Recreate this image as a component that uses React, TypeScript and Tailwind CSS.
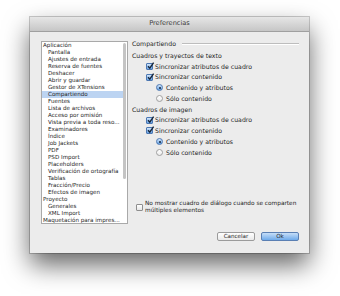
import React from "react";

const items: [string, number][] = [
  ["Aplicación", 0],
  ["Pantalla", 1],
  ["Ajustes de entrada", 1],
  ["Reserva de fuentes", 1],
  ["Deshacer", 1],
  ["Abrir y guardar", 1],
  ["Gestor de XTensions", 1],
  ["Compartiendo", 1],
  ["Fuentes", 1],
  ["Lista de archivos", 1],
  ["Acceso por omisión", 1],
  ["Vista previa a toda reso...", 1],
  ["Examinadores", 1],
  ["Índice", 1],
  ["Job Jackets", 1],
  ["PDF", 1],
  ["PSD Import", 1],
  ["Placeholders", 1],
  ["Verificación de ortografía", 1],
  ["Tablas", 1],
  ["Fracción/Precio", 1],
  ["Efectos de imagen", 1],
  ["Proyecto", 0],
  ["Generales", 1],
  ["XML Import", 1],
  ["Maquetación para impres...", 0],
];

function Checkbox({ checked }: { checked: boolean }) {
  return checked ? (
    <div className="relative w-[7px] h-[7px] shrink-0 rounded-[1px] border border-[#4d78b3] bg-linear-to-b from-[#d3e6fa] to-[#65a2e4]">
      <svg className="absolute left-0 -top-[2px]" width="8" height="8" viewBox="0 0 8 8">
        <path d="M1 4.3 L2.8 6.2 L6.6 0.6" fill="none" stroke="#15243a" strokeWidth="1.4" />
      </svg>
    </div>
  ) : (
    <div className="w-[7px] h-[7px] shrink-0 rounded-[1px] border border-[#8e8e8e] bg-linear-to-b from-white to-[#e6e6e6]" />
  );
}

function Radio({ on }: { on: boolean }) {
  return on ? (
    <div className="w-[7px] h-[7px] shrink-0 rounded-full border border-[#4d78b3] bg-linear-to-b from-[#d3e6fa] to-[#65a2e4] flex items-center justify-center">
      <div className="w-[2px] h-[2px] rounded-full bg-[#15243a]" />
    </div>
  ) : (
    <div className="w-[7px] h-[7px] shrink-0 rounded-full border border-[#a0a0a0] bg-linear-to-b from-white to-[#ececec]" />
  );
}

function CheckRow({ label, checked }: { label: string; checked: boolean }) {
  return (
    <div className="h-[10.75px] flex items-center pl-[14px] gap-[2px] whitespace-nowrap">
      <Checkbox checked={checked} />
      <span>{label}</span>
    </div>
  );
}

function RadioRow({ label, on }: { label: string; on: boolean }) {
  return (
    <div className="h-[10.75px] flex items-center pl-[24px] gap-[3px] whitespace-nowrap">
      <Radio on={on} />
      <span>{label}</span>
    </div>
  );
}

export default function App() {
  return (
    <div className="w-[340px] h-[296px] bg-white pl-[30px] pt-[17px] font-['DejaVu_Sans','Noto_Sans',sans-serif] text-[#1e1e1e]">
      <div className="w-[279px] h-[236px] flex flex-col shadow-[0_12px_24px_rgba(0,0,0,0.6),0_0_0_1px_rgba(0,0,0,0.2)]">
        <div className="h-[15px] flex items-center justify-center bg-linear-to-b from-[#e6e6e6] to-[#c6c6c6] border-b border-[#a0a0a0] text-[6.6px] text-[#3c3c3c]">
          Preferencias
        </div>
        <div className="flex-1 bg-[#ececec] flex flex-col pt-[9px] pb-[12px]">
          <div className="flex pl-[11px] pr-[10px] gap-[4px] h-[183px]">
            <div className="w-[87px] h-full bg-white border border-[#a9a9a9] flex text-[5.6px] overflow-hidden">
              <div className="flex-1 min-w-0 flex flex-col">
                {items.map(([t, lvl], i) => (
                  <div
                    key={i}
                    className={
                      "h-[7px] leading-[7px] whitespace-nowrap " +
                      (lvl ? "pl-[6px] " : "pl-[1px] ") +
                      (t === "Compartiendo" ? "bg-[#bcd4f2]" : "")
                    }
                  >
                    {t}
                  </div>
                ))}
              </div>
              <div className="w-[4px] shrink-0 h-full flex flex-col pt-[1px] pb-[1px]">
                <div className="h-[136px] w-[3px] rounded-full bg-[#c4c4c4]" />
              </div>
            </div>
            <div className="flex-1 min-w-0 h-full flex flex-col text-[6.2px] -mt-[3px]">
              <div className="h-[12px] flex items-center">
                <span>Compartiendo</span>
                <div className="flex-1 ml-[6px] h-[2px] border-t border-[#bdbdbd] border-b border-b-white" />
              </div>
              <div className="h-[11px] flex items-center">Cuadros y trayectos de texto</div>
              <CheckRow label="Sincronizar atributos de cuadro" checked />
              <CheckRow label="Sincronizar contenido" checked />
              <RadioRow label="Contenido y atributos" on />
              <RadioRow label="Sólo contenido" on={false} />
              <div className="h-[10.75px] flex items-center">Cuadros de imagen</div>
              <CheckRow label="Sincronizar atributos de cuadro" checked />
              <CheckRow label="Sincronizar contenido" checked />
              <RadioRow label="Contenido y atributos" on />
              <RadioRow label="Sólo contenido" on={false} />
              <div className="mt-auto mb-[7px] flex items-center pl-[4px] gap-[2px] whitespace-nowrap text-[5.8px]">
                <Checkbox checked={false} />
                <div className="leading-[7px]">
                  No mostrar cuadro de diálogo cuando se comparten
                  <br />
                  múltiples elementos
                </div>
              </div>
            </div>
          </div>
          <div className="mt-auto flex justify-end pr-[10px] gap-[6px] text-[5.6px]">
            <div className="w-[38px] h-[9px] rounded-[2px] border border-[#9b9b9b] bg-linear-to-b from-white to-[#e9e9e9] flex items-center justify-center">
              Cancelar
            </div>
            <div className="w-[38px] h-[9px] rounded-[2px] border border-[#5a7fb3] bg-linear-to-b from-[#c6def7] to-[#6eaaea] flex items-center justify-center">
              Ok
            </div>
          </div>
        </div>
      </div>
    </div>
  );
}
